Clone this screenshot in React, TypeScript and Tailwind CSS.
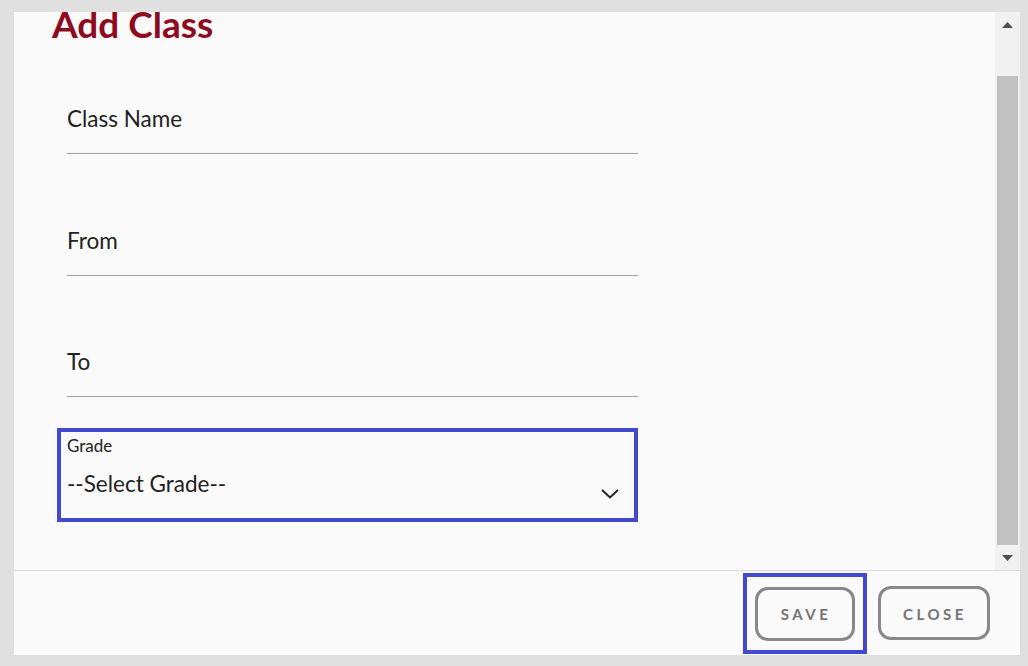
import React from "react";

function Field({ label, pt }: { label: string; pt: string }) {
  return (
    <div className={`ml-[53px] w-[571px] ${pt} pb-[20px] border-b border-[#9e9e9e]`}>
      <div className="text-[22.5px] leading-[28px] text-[#222222]">{label}</div>
    </div>
  );
}

export default function App() {
  return (
    <div className="w-[1028px] h-[666px] bg-[#e0e0e0] pl-[14px] pr-[8px] pt-[12px] font-['Lato',sans-serif]">
      <div className="h-[643px] bg-[#fafafa] flex flex-col">
        <div className="h-[558px] flex overflow-hidden">
          <div className="flex-1 overflow-hidden">
            <div className="-mt-[8px]">
              <h1 className="ml-[38px] text-[37px] leading-[40px] font-bold text-[#8e0b1f]">Add Class</h1>
              <Field label="Class Name" pt="pt-[61px]" />
              <Field label="From" pt="pt-[73px]" />
              <Field label="To" pt="pt-[72px]" />
              <div className="ml-[43px] mt-[31px] w-[581px] h-[94px] border-4 border-[#4349cf] pl-[6px] pt-[4px]">
                <div className="text-[17px] leading-[20px] text-[#222222]">Grade</div>
                <div className="mt-[14px] flex items-start justify-between pr-[15px]">
                  <div className="text-[22.5px] leading-[28px] text-[#222222]">--Select Grade--</div>
                  <svg width="18" height="10" viewBox="0 0 18 10" className="mt-[19px]">
                    <polyline points="1,1 9,8.5 17,1" fill="none" stroke="#222222" strokeWidth="2" />
                  </svg>
                </div>
              </div>
            </div>
          </div>
          <div className="w-[25px] bg-[#f1f1f1] flex flex-col items-center">
            <div className="h-[25px] w-full flex items-center justify-center">
              <svg width="11" height="6" viewBox="0 0 11 6">
                <polygon points="5.5,0 11,6 0,6" fill="#505050" />
              </svg>
            </div>
            <div className="h-[39px]" />
            <div className="w-[21px] h-[469px] bg-[#c1c1c1]" />
            <div className="h-[25px] w-full flex items-center justify-center">
              <svg width="11" height="6" viewBox="0 0 11 6">
                <polygon points="0,0 11,0 5.5,6" fill="#505050" />
              </svg>
            </div>
          </div>
        </div>
        <div className="h-[85px] border-t border-[#dddddd] flex items-center justify-end pr-[30px]">
          <div className="border-4 border-[#4349cf] px-[8px] pt-[10px] pb-[9px]">
            <button className="w-[100px] h-[54px] rounded-[13px] border-[3px] border-[#888888] text-[15px] leading-[20px] font-bold tracking-[3.5px] pl-[2px] pt-[1px] text-[#747474] bg-transparent">
              SAVE
            </button>
          </div>
          <button className="ml-[11px] w-[112px] h-[54px] rounded-[13px] border-[3px] border-[#888888] text-[15px] leading-[20px] font-bold tracking-[3.5px] pl-[2px] pt-[1px] text-[#747474] bg-transparent">
            CLOSE
          </button>
        </div>
      </div>
    </div>
  );
}
